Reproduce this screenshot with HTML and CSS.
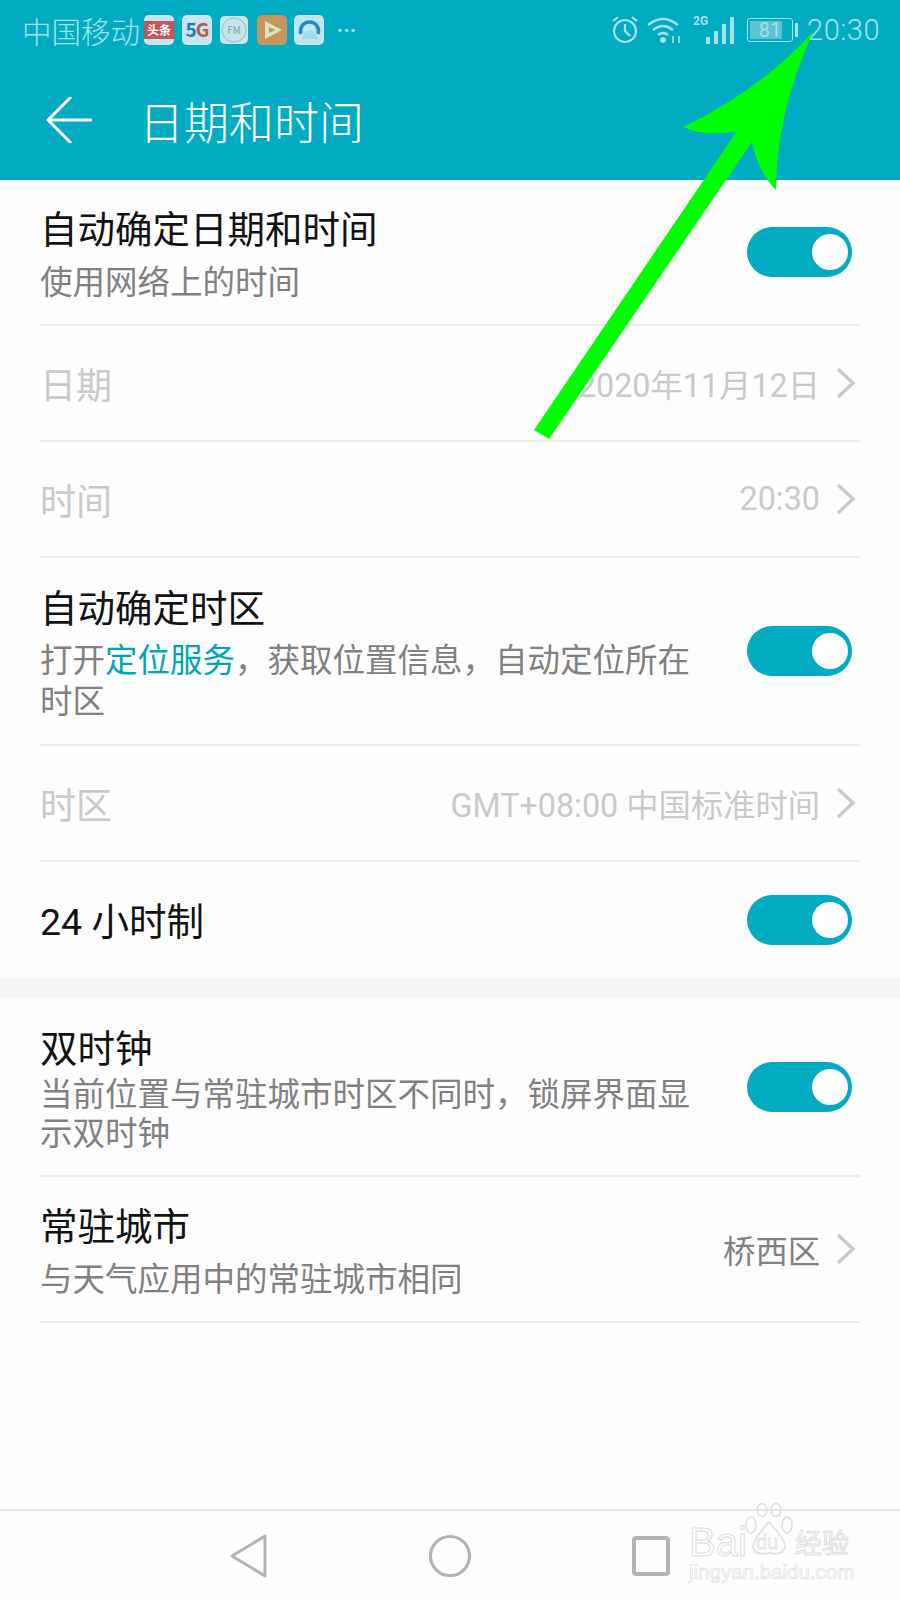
FILE: index.html
```html
<!DOCTYPE html>
<html lang="zh-CN">
<head>
  <meta charset="UTF-8">
  <meta name="viewport" content="width=device-width, initial-scale=1.0">
  <title>日期和时间</title>
  <link rel="stylesheet" href="styles.css">
</head>
<body>
  <div class="phone">
    <!-- Header -->
    <header>
      <div class="status-bar">
        <span class="carrier">中国移动</span>
        <svg class="app-icon" viewBox="0 0 30 30"><rect width="30" height="30" rx="5" fill="#c5e6ec"/><rect y="6" width="30" height="18" fill="#c9535c"/><text x="15" y="20" text-anchor="middle" class="icon-text" fill="#fff" font-size="12" font-weight="700">头条</text></svg>
        <svg class="app-icon" viewBox="0 0 30 30"><rect width="30" height="30" rx="5" fill="#c5e6ec"/><text x="15" y="22" text-anchor="middle" class="icon-text" font-size="19" font-weight="700" letter-spacing="-1"><tspan fill="#1f78b8">5</tspan><tspan fill="#bb5a50">G</tspan></text></svg>
        <svg class="app-icon" viewBox="0 0 30 30"><rect x="1" y="1" width="28" height="28" rx="5" fill="#c5e6ec"/><circle cx="15" cy="15" r="12" fill="none" stroke="#8fb0b5" stroke-width="0.8"/><text x="15" y="19" text-anchor="middle" class="icon-text" fill="#8a9ea3" font-size="10">FM</text></svg>
        <svg class="app-icon" viewBox="0 0 30 30"><rect width="30" height="30" rx="5" fill="#c8965a"/><path d="M8 6 L25 15 L8 24 Z M12 12 L12 18 L18 15 Z" fill="#d3e6c4" fill-rule="evenodd"/></svg>
        <svg class="app-icon" viewBox="0 0 30 30"><rect width="30" height="30" rx="5" fill="#bfe5ed"/><path d="M7 19 A9 9 0 1 1 24 19" fill="none" stroke="#1a8fd0" stroke-width="3.5"/><path d="M8 24 Q10 15 16 16 Q22 16 24 24 Z" fill="#a5d9e8"/></svg>
        <span class="more">···</span>
        <div class="status-right">
          <svg class="st-alarm" width="28" height="30" viewBox="0 0 28 30" fill="none" stroke="#a5e0e8" stroke-width="2.2"><circle cx="14" cy="16" r="11"/><path d="M14 9 V16 L19 21"/><path d="M2 6 L7 2 M26 6 L21 2"/></svg>
          <svg class="st-wifi" width="34" height="28" viewBox="0 0 34 28" fill="none" stroke="#a5e0e8" stroke-width="2.4"><path d="M1 9 Q16 -3 31 9"/><path d="M6 14 Q16 6 26 14"/><path d="M11 19 Q16 15 21 19"/><circle cx="16" cy="24" r="3" fill="#a5e0e8" stroke="none"/><path d="M26 27 V20 M32 27 V20" stroke-width="1.6"/></svg>
          <span class="st-signal">
            <span class="net">2G</span>
            <span class="bar b1"></span><span class="bar b2"></span><span class="bar b3"></span><span class="bar b4"></span>
          </span>
          <span class="battery"><span class="battery-fill"></span><span class="battery-num">81</span></span>
          <span class="battery-cap"></span>
          <span class="clock">20:30</span>
        </div>
      </div>
      <div class="title-bar">
        <svg class="back" width="46" height="46" viewBox="0 0 46 46" fill="none" stroke="#fff" stroke-width="3" stroke-linecap="round" stroke-linejoin="round"><path d="M24 1 L2 23 L24 45 M2 23 H45"/></svg>
        <h1>日期和时间</h1>
      </div>
    </header>

    <!-- Settings list -->
    <main>
      <div class="row row-146">
        <div class="text">
          <div class="name">自动确定日期和时间</div>
          <div class="sub">使用网络上的时间</div>
        </div>
        <span class="switch"></span>
      </div>
      <div class="row row-116 off">
        <div class="name">日期</div>
        <div class="value">2020年11月12日</div>
        <svg class="chevron" width="20" height="32" viewBox="0 0 20 32" fill="none" stroke="#c9c9c9" stroke-width="3.4"><path d="M2 2 L17 16 L2 30"/></svg>
      </div>
      <div class="row row-116 off">
        <div class="name">时间</div>
        <div class="value">20:30</div>
        <svg class="chevron" width="20" height="32" viewBox="0 0 20 32" fill="none" stroke="#c9c9c9" stroke-width="3.4"><path d="M2 2 L17 16 L2 30"/></svg>
      </div>
      <div class="row row-188">
        <div class="text">
          <div class="name">自动确定时区</div>
          <div class="sub">打开<span class="link">定位服务</span>，获取位置信息，自动定位所在时区</div>
        </div>
        <span class="switch"></span>
      </div>
      <div class="row row-116 off">
        <div class="name">时区</div>
        <div class="value">GMT+08:00 中国标准时间</div>
        <svg class="chevron" width="20" height="32" viewBox="0 0 20 32" fill="none" stroke="#c9c9c9" stroke-width="3.4"><path d="M2 2 L17 16 L2 30"/></svg>
      </div>
      <div class="row row-116 last">
        <div class="name">24 小时制</div>
        <span class="switch"></span>
      </div>
      <div class="gap"></div>
      <div class="row row-179 tight">
        <div class="text">
          <div class="name">双时钟</div>
          <div class="sub">当前位置与常驻城市时区不同时，锁屏界面显示双时钟</div>
        </div>
        <span class="switch"></span>
      </div>
      <div class="row row-146">
        <div class="text">
          <div class="name">常驻城市</div>
          <div class="sub">与天气应用中的常驻城市相同</div>
        </div>
        <div class="value dark">桥西区</div>
        <svg class="chevron" width="20" height="32" viewBox="0 0 20 32" fill="none" stroke="#c9c9c9" stroke-width="3.4"><path d="M2 2 L17 16 L2 30"/></svg>
      </div>
    </main>

    <!-- Bottom nav -->
    <nav>
      <svg width="38" height="44" viewBox="0 0 38 44" fill="none" stroke="#b3b3b3" stroke-width="3" stroke-linejoin="round"><path d="M35 2 L2 22 L35 42 Z"/></svg>
      <svg width="44" height="44" viewBox="0 0 44 44" fill="none" stroke="#b3b3b3" stroke-width="3.2"><circle cx="22" cy="22" r="19.5"/></svg>
      <svg width="38" height="40" viewBox="0 0 38 40" fill="none" stroke="#b3b3b3" stroke-width="4"><rect x="2" y="2" width="34" height="36" rx="2"/></svg>
    </nav>

    <!-- Annotation arrow -->
    <svg class="arrow" width="900" height="460" viewBox="0 0 900 460">
      <path fill="#00ff00" d="M813 32 Q760 90 683 127 Q705 137 737 131 L534 430 L549 439 L752 142 Q758 172 776 190 Q776 113 813 32 Z"/>
    </svg>

    <!-- Watermark -->
    <div class="watermark">
      <svg class="paw" width="48" height="54" viewBox="0 0 48 54" fill="none" stroke="#dedede" stroke-width="1.5"><ellipse cx="17" cy="7" rx="5" ry="6.5"/><ellipse cx="31" cy="7" rx="5" ry="6.5"/><ellipse cx="6" cy="22" rx="5" ry="8"/><ellipse cx="42" cy="22" rx="5" ry="8"/><path d="M24 19 Q8 36 8 44 Q10 53 24 50 Q38 53 40 44 Q40 36 24 19 Z"/></svg>
      <span class="wm-bai">Bai</span>
      <span class="wm-du">du</span>
      <span class="wm-cn">经验</span>
      <div class="wm-url">jingyan.baidu.com</div>
    </div>
  </div>
</body>
</html>
```

FILE: styles.css
```css
body {
  margin: 0;
  padding: 0;
  background-color: #fdfdfd;
  font-family: Roboto, "Noto Sans CJK SC", sans-serif;
}
.phone {
  position: relative;
  width: 900px;
  height: 1600px;
  overflow: hidden;
  display: flex;
  flex-direction: column;
}
header {
  height: 180px;
  background-color: #00abc3;
  flex-shrink: 0;
}
.status-bar {
  display: flex;
  align-items: center;
  height: 60px;
  padding: 0 20px 0 22px;
  color: #a5e0e8;
}
.carrier {
  font-size: 29.5px;
  font-weight: 300;
  margin-right: 4px;
}
.app-icon {
  width: 30px;
  height: 30px;
  margin-right: 7.5px;
}
.icon-text {
  font-family: "Noto Sans CJK SC", sans-serif;
}
.more {
  font-size: 22px;
  font-weight: 700;
  margin-left: 5px;
}
.status-right {
  margin-left: auto;
  display: flex;
  align-items: center;
}
.st-alarm {
  margin-right: 8px;
}
.st-wifi {
  margin-right: 8px;
}
.st-signal {
  position: relative;
  display: flex;
  align-items: flex-end;
  justify-content: flex-end;
  gap: 4px;
  width: 45px;
  height: 28px;
  margin-right: 13px;
}
.net {
  position: absolute;
  left: 4px;
  top: -2px;
  font-size: 12px;
  font-weight: 700;
}
.bar {
  width: 4px;
  background-color: #a5e0e8;
}
.b1 { height: 7px; }
.b2 { height: 13px; }
.b3 { height: 20px; }
.b4 { height: 27px; }
.battery {
  position: relative;
  width: 44px;
  height: 22px;
  border: 1px solid #a5e0e8;
  border-radius: 3px;
  display: flex;
  align-items: center;
  justify-content: center;
}
.battery-fill {
  position: absolute;
  left: 2px;
  top: 2px;
  bottom: 2px;
  width: 32px;
  background-color: #5cc3d5;
}
.battery-num {
  position: relative;
  font-size: 20px;
}
.battery-cap {
  width: 3px;
  height: 14px;
  margin-left: 2px;
  background-color: #a5e0e8;
}
.clock {
  font-size: 29px;
  font-weight: 300;
  margin-left: 9px;
  letter-spacing: 0.5px;
}
.title-bar {
  display: flex;
  align-items: center;
  height: 120px;
  padding-left: 46px;
  color: white;
}
.title-bar h1 {
  margin: 0 0 0 47px;
  font-size: 45px;
  font-weight: 300;
}
main {
  flex: 1;
}
.row {
  display: flex;
  align-items: center;
  margin: 0 40px;
  padding-right: 8px;
  border-bottom: 2px solid #ececec;
  box-sizing: border-box;
}
.row.last {
  border-bottom: none;
}
.row-116 { height: 116px; }
.row-146 { height: 146px; }
.row-179 { height: 179px; }
.row-188 { height: 188px; }
.text {
  flex: 1;
  padding-top: 5.5px;
}
.name {
  font-size: 37.5px;
  line-height: 48px;
  color: #111;
}
.text .name {
  margin-bottom: 8.5px;
}
.tight .text .name {
  margin-bottom: 3px;
}
.tight .sub {
  line-height: 39px;
}
.sub {
  width: 660px;
  font-size: 32.5px;
  line-height: 41px;
  color: #808080;
}
.link {
  color: #00a3bb;
}
.off .name {
  color: #c9c9c9;
  font-size: 36px;
  flex: 1;
  padding-top: 8px;
}
.last .name {
  flex: 1;
  padding-top: 3px;
}
.value {
  font-size: 32.3px;
  color: #c9c9c9;
  margin-right: 16px;
}
.value.dark {
  color: #808080;
}
.chevron {
  flex-shrink: 0;
  margin-right: -4px;
}
.switch {
  position: relative;
  width: 105px;
  height: 50px;
  border-radius: 25px;
  background-color: #00abc3;
  flex-shrink: 0;
}
.switch::after {
  content: "";
  position: absolute;
  right: 4px;
  top: 7px;
  width: 36px;
  height: 36px;
  border-radius: 50%;
  background-color: white;
}
.gap {
  height: 20px;
  background-color: #f5f5f5;
}
nav {
  flex-shrink: 0;
  height: 89px;
  border-top: 2px solid #e6e6e6;
  display: flex;
  align-items: center;
  justify-content: center;
  gap: 160px;
}
.arrow {
  position: absolute;
  left: 0;
  top: 0;
}
.watermark {
  position: absolute;
  left: 689px;
  top: 1503px;
  width: 170px;
  height: 80px;
  font-family: "Liberation Sans", "Noto Sans CJK SC", sans-serif;
  color: #fdfdfd;
}
.paw {
  position: absolute;
  left: 56px;
  top: 0;
}
.wm-bai {
  position: absolute;
  left: 0;
  top: 17px;
  font-size: 40px;
  -webkit-text-stroke: 1px #dedede;
}
.wm-du {
  position: absolute;
  left: 67px;
  top: 28px;
  font-size: 20px;
  -webkit-text-stroke: 0.8px #dedede;
}
.wm-cn {
  position: absolute;
  left: 106px;
  top: 19px;
  font-size: 27px;
  -webkit-text-stroke: 1px #dedede;
}
.wm-url {
  position: absolute;
  left: 0;
  top: 57px;
  font-size: 20.5px;
  -webkit-text-stroke: 0.7px #dedede;
}
```
